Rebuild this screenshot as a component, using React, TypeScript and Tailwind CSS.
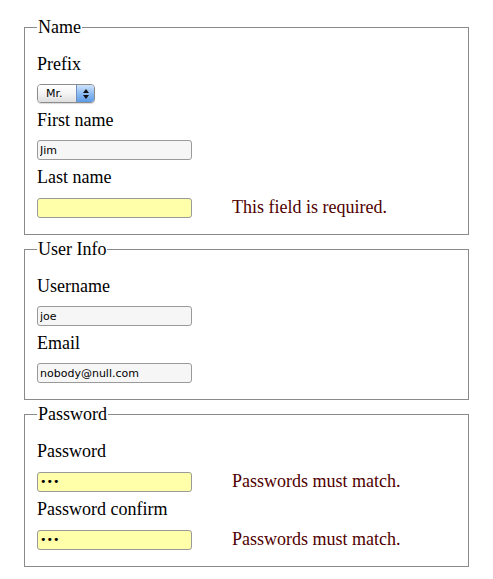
import React from "react";

const serif = { fontFamily: '"Liberation Serif", "Times New Roman", serif' };

const inputBase =
  "block w-[155px] h-[20px] rounded-[3px] border border-[#9a9a9a] px-[2px] text-[11px] text-black outline-none font-['DejaVu_Sans',sans-serif]";

const Field = ({
  label,
  children,
  error,
}: {
  label: string;
  children: React.ReactNode;
  error?: string;
}) => (
  <div className="flex flex-col">
    <label className="block text-[18px] leading-[21px] text-black">{label}</label>
    <div className="mt-[9px] flex items-center">
      {children}
      {error && <span className="ml-[40px] text-[18px] leading-[21px] text-[#500000]">{error}</span>}
    </div>
  </div>
);

const Group = ({ legend, children }: { legend: string; children: React.ReactNode }) => (
  <fieldset className="border border-[#8a8a8a] px-[12px] pb-[16px]">
    <legend className="px-[1px] text-[18px] leading-[21px] text-black">{legend}</legend>
    <div className="flex flex-col gap-[7px] pt-[16px]">{children}</div>
  </fieldset>
);

const PrefixSelect = () => (
  <div className="flex h-[19px] w-[58px] overflow-hidden rounded-[4px] border border-[#8c8c8c] shadow-[0_1px_1px_rgba(0,0,0,0.15)]">
    <select
      defaultValue="Mr."
      className="flex-1 appearance-none bg-gradient-to-b from-white via-[#f4f4f4] to-[#dedede] pl-[8px] text-[11px] leading-[17px] text-black outline-none font-['DejaVu_Sans',sans-serif]"
    >
      <option>Mr.</option>
      <option>Mrs.</option>
      <option>Ms.</option>
    </select>
    <div className="flex w-[18px] flex-col items-center justify-center gap-[2px] border-l border-[#6f8fc0] bg-gradient-to-b from-[#cfe3fb] via-[#8ebcf2] to-[#5d9be6]">
      <svg width="6" height="4" viewBox="0 0 6 4">
        <path d="M3 0 L6 4 L0 4 Z" fill="#111" />
      </svg>
      <svg width="6" height="4" viewBox="0 0 6 4">
        <path d="M0 0 L6 0 L3 4 Z" fill="#111" />
      </svg>
    </div>
  </div>
);

export default function App() {
  return (
    <div className="min-h-[579px] bg-white px-[24px] pt-[17px]" style={serif}>
      <form className="flex flex-col gap-[4px]">
        <Group legend="Name">
          <Field label="Prefix">
            <PrefixSelect />
          </Field>
          <Field label="First name">
            <input className={`${inputBase} bg-[#f6f6f6]`} defaultValue="Jim" />
          </Field>
          <Field label="Last name" error="This field is required.">
            <input className={`${inputBase} bg-[#ffffaa]`} defaultValue="" />
          </Field>
        </Group>

        <Group legend="User Info">
          <Field label="Username">
            <input className={`${inputBase} bg-[#f6f6f6]`} defaultValue="joe" />
          </Field>
          <Field label="Email">
            <input className={`${inputBase} bg-[#f6f6f6]`} defaultValue="nobody@null.com" />
          </Field>
        </Group>

        <Group legend="Password">
          <Field label="Password" error="Passwords must match.">
            <input type="password" className={`${inputBase} bg-[#ffffaa]`} defaultValue="abc" />
          </Field>
          <Field label="Password confirm" error="Passwords must match.">
            <input type="password" className={`${inputBase} bg-[#ffffaa]`} defaultValue="abc" />
          </Field>
        </Group>
      </form>
    </div>
  );
}
